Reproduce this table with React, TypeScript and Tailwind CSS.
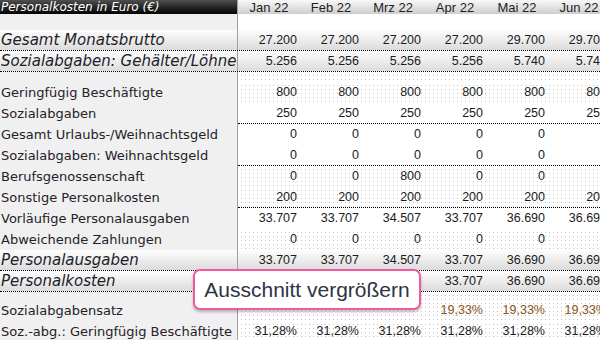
const months = ["Jan 22", "Feb 22", "Mrz 22", "Apr 22", "Mai 22", "Jun 22"];

const dots =
  "bg-[linear-gradient(90deg,#fff_3px,transparent_3px),linear-gradient(#fff_3px,#c4c4c4_3px)] bg-size-[4px_4px]";

type Row =
  | { kind: "big"; label: string; values: string[] }
  | { kind: "row"; label: string; values: string[]; dotted?: boolean; line?: boolean; tone?: string }
  | { kind: "gap"; h: string; dotted?: boolean };

const rows: Row[] = [
  { kind: "gap", h: "h-[16px]" },
  { kind: "big", label: "Gesamt Monatsbrutto", values: ["27.200", "27.200", "27.200", "27.200", "29.700", "29.700"] },
  { kind: "big", label: "Sozialabgaben: Gehälter/Löhne", values: ["5.256", "5.256", "5.256", "5.256", "5.740", "5.740"] },
  { kind: "gap", h: "h-[10px]", dotted: true },
  { kind: "row", label: "Geringfügig Beschäftigte", values: ["800", "800", "800", "800", "800", "800"], dotted: true },
  { kind: "row", label: "Sozialabgaben", values: ["250", "250", "250", "250", "250", "250"], line: true },
  { kind: "row", label: "Gesamt Urlaubs-/Weihnachtsgeld", values: ["0", "0", "0", "0", "0", "0"] },
  { kind: "row", label: "Sozialabgaben: Weihnachtsgeld", values: ["0", "0", "0", "0", "0", "0"], line: true },
  { kind: "row", label: "Berufsgenossenschaft", values: ["0", "0", "800", "0", "0", "0"], dotted: true },
  { kind: "row", label: "Sonstige Personalkosten", values: ["200", "200", "200", "200", "200", "200"], dotted: true, line: true },
  { kind: "row", label: "Vorläufige Personalausgaben", values: ["33.707", "33.707", "34.507", "33.707", "36.690", "36.690"] },
  { kind: "row", label: "Abweichende Zahlungen", values: ["0", "0", "0", "0", "0", "0"], dotted: true },
  { kind: "big", label: "Personalausgaben", values: ["33.707", "33.707", "34.507", "33.707", "36.690", "36.690"] },
  // Jan–Mrz of the next two rows sit under the tooltip in the screenshot
  { kind: "big", label: "Personalkosten", values: ["", "", "", "33.707", "36.690", "36.690"] },
  { kind: "gap", h: "h-[8px]", dotted: true },
  { kind: "row", label: "Sozialabgabensatz", values: ["", "", "", "19,33%", "19,33%", "19,33%"], dotted: true, tone: "text-[#8a5420]" },
  { kind: "row", label: "Soz.-abg.: Geringfügig Beschäftigte", values: ["31,28%", "31,28%", "31,28%", "31,28%", "31,28%", "31,28%"], dotted: true },
];

const labelFont = "font-['DejaVu_Sans',sans-serif]";
const numFont = "font-['Liberation_Sans',Arial,sans-serif]";

function TableRow({ row }: { row: Row }) {
  if (row.kind === "gap") {
    return (
      <div className={`flex ${row.h}`}>
        <div className="w-[238px] shrink-0 border-r border-[#a0a0a0] bg-[#f0f0f0]" />
        <div className={`flex-1 ${row.dotted ? dots : "bg-white"}`} />
      </div>
    );
  }

  if (row.kind === "big") {
    return (
      <div className="flex h-[21px] border-b border-dotted border-black bg-linear-to-b from-[#fdfdfd] to-[#dcdcdc]">
        <div
          className={`flex w-[238px] shrink-0 items-center border-r border-[#a0a0a0] pl-px text-[15px] italic text-[#1d1d2a] ${labelFont}`}
        >
          {row.label}
        </div>
        {row.values.map((v, i) => (
          <div
            key={i}
            className={`flex w-[62px] shrink-0 items-center justify-end pr-[3px] text-[12.5px] text-[#1b1b1b] ${numFont}`}
          >
            {v}
          </div>
        ))}
      </div>
    );
  }

  return (
    <div className="flex h-[21px]">
      <div
        className={`flex w-[238px] shrink-0 items-center border-r border-[#a0a0a0] bg-[#f0f0f0] pl-px text-[13px] text-[#26202a] ${labelFont}`}
      >
        {row.label}
      </div>
      <div
        className={`flex flex-1 ${row.dotted ? dots : "bg-white"} ${row.line ? "border-b border-dotted border-black" : ""}`}
      >
        {row.values.map((v, i) => (
          <div
            key={i}
            className={`flex w-[62px] shrink-0 items-center justify-end pr-[3px] text-[12.5px] ${row.tone ?? "text-[#1b1b1b]"} ${numFont}`}
          >
            {v}
          </div>
        ))}
      </div>
    </div>
  );
}

export default function App() {
  return (
    <div className="relative h-[340px] w-[600px] overflow-hidden bg-white">
      <div className="flex h-[14px]">
        <div
          className={`flex w-[238px] shrink-0 items-center border-r border-[#a0a0a0] bg-linear-to-b from-[#505050] to-[#050505] pl-px text-[12px] italic leading-none text-white ${labelFont}`}
        >
          Personalkosten in Euro (€)
        </div>
        <div className="flex flex-1 bg-linear-to-b from-[#f8f8f8] to-[#cecece]">
          {months.map((m) => (
            <div
              key={m}
              className={`flex w-[62px] shrink-0 items-center justify-center text-[13px] leading-none text-[#1e1e1e] ${numFont}`}
            >
              {m}
            </div>
          ))}
        </div>
      </div>

      {rows.map((r, i) => (
        <TableRow key={i} row={r} />
      ))}

      <div
        className={`absolute left-[193px] top-[269px] flex h-[41px] w-[228px] items-center justify-center rounded-[7px] border-2 border-[#ef5b9c] bg-white text-[21px] text-[#2e3444] shadow-[0_2px_3px_rgba(0,0,0,0.25)] ${numFont}`}
      >
        Ausschnitt vergrößern
      </div>
    </div>
  );
}
